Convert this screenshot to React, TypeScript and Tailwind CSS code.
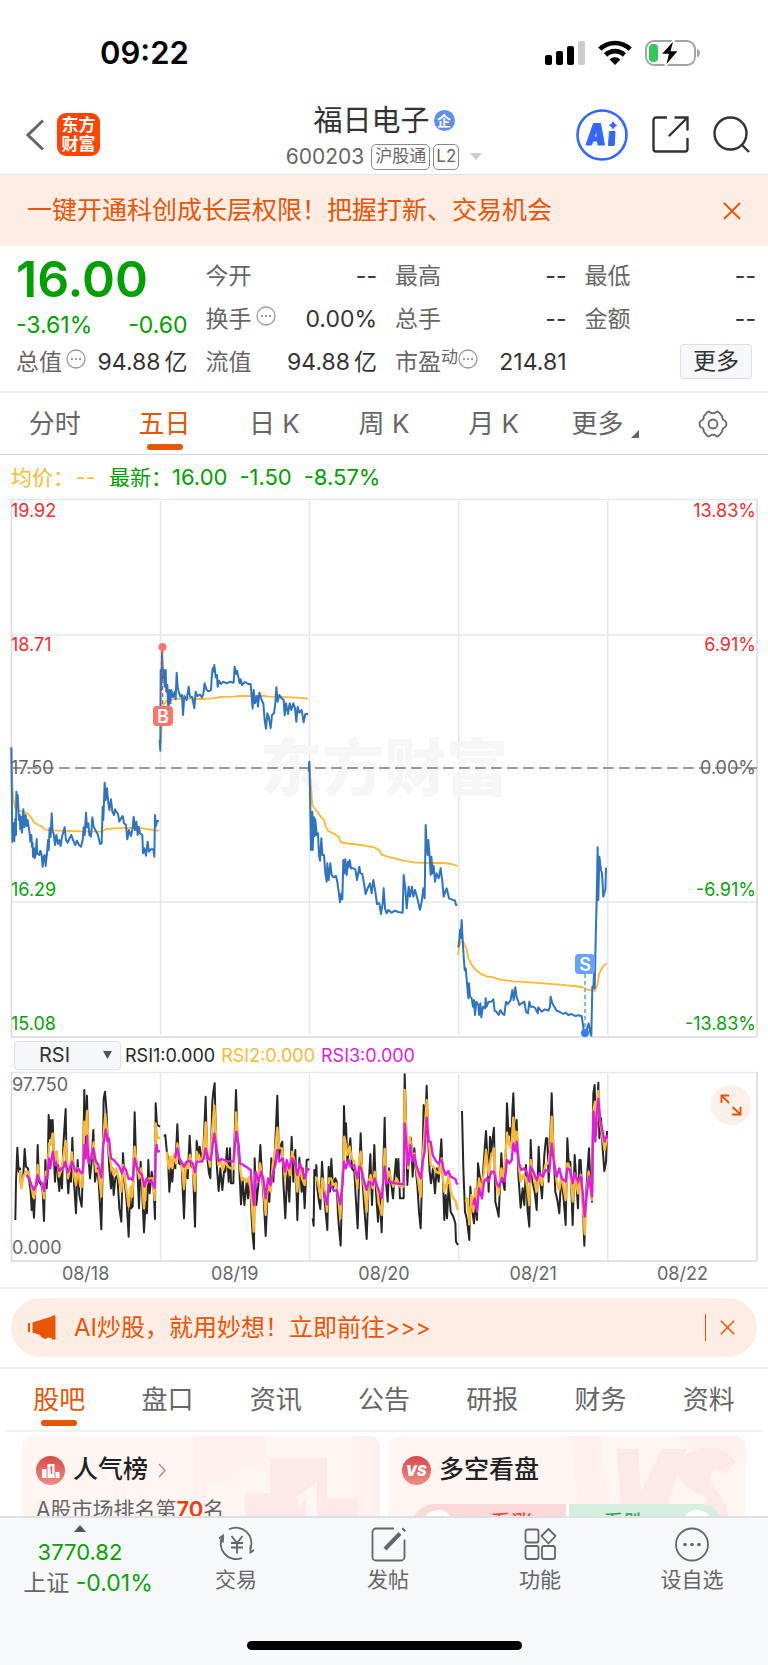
import React, { useState } from 'react';

// Points are plotted on a grid three times finer than the chart units
const PRICE_DAYS = [
  {
    transform: 'translate(0 242) scale(0.33333)',
    avg: '34,25 37,130 40,175 45,203 55,212 70,215 85,222 95,235 103,248 115,255 126,260 135,268 145,271 180,272 245,274 305,275 318,267 345,265 400,263 430,265 450,269 465,272 477,272',
    price: '34,22 37,305 41,250 43,303 46,236 48,285 49,155 51,200 53,165 57,240 59,225 61,268 64,230 66,278 70,208 73,262 77,225 80,258 83,240 86,262 89,280 91,305 94,285 96,320 98,310 99,350 102,325 104,355 107,345 110,297 112,340 118,345 121,332 125,345 128,380 131,350 134,345 137,378 141,340 144,300 146,330 149,265 152,290 155,220 158,275 161,280 165,315 169,285 174,312 178,300 182,318 186,290 194,262 198,300 203,308 207,298 214,285 219,300 226,315 231,302 237,315 243,320 248,300 251,262 254,285 258,218 261,262 265,250 268,285 273,290 277,232 281,260 286,270 293,282 300,312 305,310 308,200 310,240 314,128 317,180 321,145 324,180 328,210 333,178 337,215 342,225 345,208 349,215 354,222 358,245 363,235 368,228 372,250 378,255 382,298 387,270 393,288 398,265 401,230 405,270 409,245 413,285 416,260 420,280 427,285 429,340 433,325 438,347 443,305 447,335 452,328 460,328 463,350 465,225 468,258 471,243 477,243',
  },
  {
    transform: 'translate(0 -8) scale(0.33333)',
    avg: '483,760 486,690 490,645 500,632 520,628 560,625 600,627 640,625 660,621 700,620 720,618 790,618 810,620 880,622 924,626',
    price: '479,750 481,782 482,540 484,600 486,485 489,565 491,540 494,590 497,540 499,605 502,585 505,665 508,600 511,640 514,600 519,622 524,605 527,628 530,548 533,590 536,605 541,620 546,615 549,675 553,618 560,630 566,590 570,620 577,622 583,655 587,605 592,618 600,614 606,622 610,612 614,580 620,600 626,604 633,600 635,565 638,535 641,545 643,525 647,562 651,555 653,590 657,572 663,582 670,575 680,580 690,575 701,578 704,530 708,552 711,542 715,560 719,580 722,568 726,585 735,576 745,582 752,582 755,620 758,655 761,600 765,640 770,618 774,650 778,608 785,630 790,640 794,690 798,716 802,670 806,680 812,714 816,675 822,670 826,640 829,592 833,635 838,615 845,625 851,630 854,676 858,640 864,672 869,640 874,660 880,640 885,655 889,695 893,650 898,668 905,660 911,697 916,672 924,672',
  },
  {
    transform: 'translate(300 242) scale(0.33333)',
    avg: '28,65 32,130 37,195 45,208 55,218 62,230 72,240 78,262 85,273 100,280 115,290 122,305 130,309 160,312 195,317 225,323 240,332 243,343 260,349 285,355 310,362 340,367 380,369 430,369 455,372 472,378',
    price: '26,95 28,65 30,150 33,330 37,215 38,330 42,232 44,288 46,238 50,285 54,280 57,345 60,362 64,295 67,345 72,345 76,400 80,425 82,370 86,420 91,370 95,405 100,412 108,408 112,425 116,455 120,487 124,460 127,478 130,360 133,400 136,358 140,405 144,365 146,382 149,360 153,385 160,385 166,388 171,420 178,380 181,400 187,402 192,430 197,462 203,445 210,430 215,460 220,420 226,455 231,492 238,490 243,522 248,490 251,445 255,505 260,520 265,510 275,518 285,512 295,516 308,518 311,405 316,445 320,505 326,440 330,470 336,440 340,470 345,450 352,475 360,510 366,480 370,445 374,475 377,255 380,320 383,345 385,300 389,350 392,405 394,350 398,400 401,378 405,425 410,400 416,415 422,385 427,425 431,470 436,455 440,445 447,475 455,478 465,482 468,495 472,495',
  },
  {
    transform: 'translate(300 242) scale(0.33333)',
    avg: '474,645 477,620 483,605 488,602 492,610 500,628 505,655 515,675 525,688 540,700 560,709 580,712 600,719 640,724 700,728 780,734 845,741 865,750 885,752 892,735 898,700 908,680 920,670',
    price: '475,622 478,598 480,570 482,595 485,540 488,600 491,650 494,690 497,685 502,740 505,775 507,730 510,770 515,775 519,800 522,780 525,825 529,785 535,795 537,825 541,790 544,832 549,800 555,805 557,775 560,800 566,785 574,785 580,778 584,812 589,815 596,825 601,810 608,822 613,825 618,785 624,792 632,780 637,750 641,780 646,742 650,772 655,785 658,795 665,790 673,785 678,815 684,820 688,785 692,800 700,800 706,805 713,820 715,802 725,815 735,808 745,812 750,800 752,770 757,790 763,800 770,812 780,816 790,822 797,818 805,825 815,822 825,828 835,826 845,828 849,855 853,880 858,882 862,862 866,850 870,875 874,887 877,740 880,745 882,700 884,745 887,600 890,480 893,322 895,480 898,350 903,390 906,400 910,470 914,455 916,450 918,383',
  },
];

const RSI_DAYS = [
  {
    transform: 'translate(0 -36) scale(0.33333)',
    rsi1: '46,555 48,440 52,338 56,410 60,400 63,455 67,430 70,420 74,342 78,395 84,400 88,440 92,470 95,525 98,490 102,548 106,460 110,450 113,330 117,440 124,450 128,470 132,558 136,375 140,460 143,400 146,240 149,310 152,255 155,310 158,255 161,350 165,440 170,350 174,430 178,468 182,400 186,460 190,330 197,222 200,400 205,475 209,400 213,440 217,308 222,440 228,535 233,375 238,480 245,515 249,400 253,165 257,330 261,182 265,360 270,430 275,380 280,285 285,440 291,400 296,440 304,583 308,400 311,190 315,170 319,220 323,310 328,400 333,460 337,400 341,480 346,430 352,420 358,520 364,560 369,355 374,440 380,500 386,605 390,480 393,520 398,515 404,232 408,370 412,400 417,520 422,380 427,480 432,592 437,500 441,535 445,375 449,475 455,410 460,440 465,552 467,205 471,270 480,275',
    rsi2: '60,405 64,460 70,425 78,410 84,410 90,430 95,460 102,490 108,455 113,390 118,435 126,445 132,490 137,410 142,425 147,325 152,330 158,295 164,380 170,350 177,425 184,405 190,365 197,318 204,430 210,400 216,352 222,420 228,450 234,400 241,455 247,455 253,260 257,300 261,228 267,370 274,370 281,322 288,410 295,405 304,485 309,320 316,238 321,290 328,360 335,400 341,420 348,400 356,430 364,470 369,390 376,440 386,515 392,455 397,485 404,335 410,385 418,430 424,400 432,520 438,450 446,430 455,430 460,430 464,495 467,265 472,310 480,308',
    rsi3: '80,420 88,432 94,450 102,465 108,450 113,420 120,440 127,445 132,468 138,425 142,430 147,370 151,400 158,350 165,390 173,390 178,408 186,400 192,395 196,380 203,412 209,400 216,380 223,400 229,410 236,402 244,415 249,410 253,330 257,370 261,302 266,385 272,370 280,340 287,378 295,390 304,428 310,330 317,283 323,320 327,310 333,370 341,375 350,385 358,395 366,415 371,395 378,405 386,432 392,430 398,435 404,370 410,395 418,410 426,420 433,455 440,430 447,440 455,440 464,458 467,350 470,330 472,350 480,348',
  },
  {
    transform: 'translate(0 -36) scale(0.33333)',
    rsi1: '492,305 496,300 500,345 504,370 508,470 513,400 517,440 521,380 526,400 532,268 537,385 545,390 552,550 557,400 563,430 569,302 574,395 579,400 585,575 590,318 595,360 599,335 605,370 610,350 617,185 621,360 627,415 631,430 637,200 640,170 644,145 648,330 651,400 656,468 661,400 667,465 673,400 676,410 681,340 686,440 690,340 693,445 700,445 704,300 708,165 712,300 718,400 723,508 728,430 733,510 740,440 744,490 750,430 755,550 758,600 762,642 764,370 769,510 775,450 781,330 786,420 791,490 797,603 803,470 808,500 814,370 820,440 826,320 832,182 837,370 842,330 847,320 850,440 856,550 862,400 868,500 875,305 880,440 886,345 892,555 898,368 905,470 908,400 914,520 920,375 928,373',
    rsi2: '500,350 506,400 512,365 517,400 523,355 528,385 532,325 538,370 545,385 552,462 558,390 564,400 570,360 577,390 585,468 590,350 598,370 606,380 612,330 617,262 622,350 630,395 636,290 643,212 648,300 655,390 662,375 669,405 676,380 684,395 692,400 702,402 708,232 713,300 720,400 726,435 733,430 740,440 748,425 755,500 761,590 766,420 774,440 780,385 788,430 797,540 804,440 812,470 818,390 825,350 832,278 838,340 846,340 855,430 862,385 870,420 876,350 884,380 892,470 899,390 906,430 914,450 921,400 928,405',
    rsi3: '525,370 532,340 538,370 552,395 560,380 570,378 578,385 585,412 590,380 605,380 612,370 617,340 624,370 633,375 638,330 643,295 650,345 656,378 665,372 680,378 700,380 704,340 709,290 716,330 720,385 730,390 745,400 752,405 758,480 762,510 767,410 776,440 783,410 790,430 797,490 804,430 812,450 820,410 826,390 832,345 838,380 848,370 855,410 860,375 868,400 876,370 884,380 892,420 900,385 908,410 915,430 921,400 928,405',
  },
  {
    transform: 'translate(300 -36) scale(0.33333)',
    rsi1: '38,550 41,572 43,405 47,420 49,390 52,460 57,500 61,522 66,380 71,460 76,520 82,585 86,395 90,470 94,372 99,460 106,430 110,440 114,540 118,590 122,632 126,470 130,380 132,213 135,310 138,265 142,380 151,310 156,400 163,410 168,500 173,580 178,400 182,295 187,430 193,520 200,612 205,470 211,358 216,510 223,330 228,470 234,560 239,480 245,592 250,400 254,248 258,440 263,500 267,400 273,440 279,490 284,420 288,372 292,440 295,372 300,490 311,490 314,118 318,250 322,450 328,330 333,310 338,425 343,340 347,400 352,450 357,530 362,580 367,400 371,210 375,290 380,152 384,300 389,410 393,445 399,400 405,475 410,400 416,440 424,313 429,440 433,555 437,480 441,550 446,450 452,530 460,545 466,565 468,620 474,630',
    rsi2: '50,425 55,450 62,490 67,430 73,460 81,530 87,430 93,430 100,450 108,445 115,490 121,550 126,450 130,380 133,305 138,330 142,360 149,335 155,370 163,380 172,460 177,380 182,350 188,420 200,530 206,440 212,420 218,460 224,410 230,450 236,500 245,540 250,430 254,342 260,440 267,410 280,455 290,430 300,455 311,455 314,165 319,300 324,400 330,305 337,370 343,355 350,410 362,485 367,380 373,300 380,195 386,310 392,390 400,395 408,410 418,415 425,370 432,470 440,450 446,420 452,470 460,490 468,500 470,515 474,525',
    rsi3: '72,470 81,508 87,450 94,455 102,468 110,465 121,508 127,450 132,380 137,400 146,375 152,395 162,390 172,430 178,395 183,400 190,430 200,465 206,440 214,445 219,450 224,430 232,455 245,490 250,440 254,395 260,445 268,440 285,445 311,448 314,265 320,340 325,390 331,330 337,380 343,360 350,395 362,430 368,380 374,350 380,248 386,320 392,320 398,360 406,375 414,385 425,375 430,400 437,420 445,408 452,425 466,432 470,445 474,448',
  },
  {
    transform: 'translate(300 -36) scale(0.33333)',
    rsi1: '486,228 490,400 495,530 500,550 508,615 511,455 516,520 522,565 527,490 531,555 534,385 540,430 546,460 552,370 558,288 563,380 566,470 570,305 574,350 578,310 582,278 586,500 592,525 596,545 604,355 609,440 614,465 618,330 621,205 626,300 630,280 634,320 637,230 640,175 645,330 650,255 655,420 662,518 668,460 673,510 678,390 683,530 688,575 692,315 697,440 704,470 710,525 716,335 721,440 726,490 733,360 738,310 742,310 746,440 751,300 755,175 760,330 766,470 772,495 778,535 783,430 790,480 797,570 802,310 806,380 811,380 818,570 824,360 829,440 834,520 838,375 842,375 848,500 853,632 858,480 863,400 867,340 871,440 876,500 880,175 884,150 888,300 892,230 895,143 898,310 903,250 908,340 913,408 918,380 921,288',
    rsi2: '497,500 502,490 508,568 514,480 520,530 526,460 531,500 537,430 544,470 552,410 558,345 566,420 572,370 582,340 588,440 596,480 604,400 610,425 616,370 621,293 628,330 634,340 640,247 646,330 650,290 656,390 662,440 670,420 678,430 688,510 692,375 700,420 710,470 718,420 726,450 736,390 745,385 750,350 755,245 762,370 770,440 778,465 784,420 797,495 802,385 810,400 818,500 824,415 834,475 842,420 848,500 854,598 860,470 866,410 876,495 880,230 885,200 890,260 895,168 900,260 908,310 914,345 921,310',
    rsi3: '520,510 524,490 531,530 537,460 546,490 552,440 560,430 566,440 574,410 582,410 590,445 598,455 605,430 614,440 621,375 628,385 635,375 640,325 646,350 650,320 657,385 664,405 672,400 680,410 688,440 692,395 700,410 710,435 718,415 728,425 737,405 748,410 755,325 762,385 770,425 778,400 785,430 797,440 802,400 810,405 818,445 824,415 834,440 842,425 848,470 854,545 860,480 867,425 876,485 880,230 886,320 889,250 895,192 901,260 908,290 914,320 921,300',
  },
];

const PRICE_LABELS = [
  { y: 19, left: '19.92', right: '13.83%', color: '#f92a2a' },
  { y: 153, left: '18.71', right: '6.91%', color: '#f92a2a' },
  { y: 276, left: '17.50', right: '0.00%', color: '#666666' },
  { y: 398, left: '16.29', right: '-6.91%', color: '#07a207' },
  { y: 532, left: '15.08', right: '-13.83%', color: '#07a207' },
];

const DATES = ['08/18', '08/19', '08/20', '08/21', '08/22'];
const PERIODS = ['分时', '五日', '日 K', '周 K', '月 K'];
const SECTIONS = ['股吧', '盘口', '资讯', '公告', '研报', '财务', '资料'];

const MoreDots = () => (
  <svg width="20" height="20" viewBox="0 0 20 20" className="shrink-0">
    <circle cx="10" cy="10" r="9" fill="none" stroke="#999" strokeWidth="1.3" />
    <g fill="#888">
      <circle cx="6" cy="10" r="1.1" />
      <circle cx="10" cy="10" r="1.1" />
      <circle cx="14" cy="10" r="1.1" />
    </g>
  </svg>
);

const CloseIcon = ({ size }: { size: number }) => (
  <svg width={size} height={size} viewBox="0 0 18 18" stroke="#ea5504" strokeWidth="1.8">
    <path d="M1 1 17 17M17 1 1 17" />
  </svg>
);

const StatusBar = () => (
  <div className="flex h-23 items-center justify-between pt-[13px] pr-[67px] pl-[100px]">
    <span className="text-[31px] leading-10 font-semibold text-black">09:22</span>
    <div className="flex items-center gap-[13px]">
      <svg width="40" height="26" viewBox="0 0 40 26">
        <rect x="0" y="15" width="7" height="10" rx="2" />
        <rect x="11" y="11" width="7" height="14" rx="2" />
        <rect x="22" y="6" width="7" height="19" rx="2" />
        <rect x="33" y="1" width="7" height="24" rx="2" fill="#ccc" />
      </svg>
      <svg width="34" height="26" viewBox="0 0 34 26" fill="none" stroke="#000" strokeWidth="4.6">
        <path d="M1.8 9.2a21.6 21.6 0 0 1 30.4 0" />
        <path d="M7.6 15a13.4 13.4 0 0 1 18.8 0" />
        <path d="M17 25 11.6 19.4a7.7 7.7 0 0 1 10.8 0Z" fill="#000" stroke="none" />
      </svg>
      <svg width="56" height="28" viewBox="0 0 56 28">
        <rect x="1" y="2" width="49" height="24" rx="8" fill="none" stroke="#a5a5a5" strokeWidth="2" />
        <path d="M52 10c4 1 4 7 0 8Z" fill="#a5a5a5" />
        <rect x="4" y="5" width="9" height="18" rx="4" fill="#34c759" />
        <path d="M29.500 0 15.500 15.500h7.500L20 28 34 11.500h-7.500Z" stroke="#fff" strokeWidth="1.500" />
      </svg>
    </div>
  </div>
);

const Header = () => (
  <header className="grid h-[83px] grid-cols-[1fr_auto_1fr] items-center border-b border-[#dfe2e6] px-[18px] pt-[3px]">
    <div className="flex items-center gap-[13px] pl-2">
      <button aria-label="返回">
        <svg width="18" height="32" viewBox="0 0 18 32" fill="none" stroke="#666" strokeWidth="3">
          <path d="M17 1.500 2 16l15 14.500" />
        </svg>
      </button>
      <div className="flex size-[43px] flex-col items-center justify-center rounded-[9px] bg-[#ff4400] text-[17px] leading-[19px] font-bold text-white">
        <span>东方</span>
        <span>财富</span>
      </div>
    </div>
    <div className="flex flex-col items-center pt-1.5">
      <h1 className="flex h-[38px] items-center gap-1 text-[29px] text-[#333]">
        福日电子
        <span className="flex size-[21px] items-center justify-center rounded-full bg-[#5f8fea] text-[14px] leading-none font-bold text-white">企</span>
      </h1>
      <div className="flex h-[34px] items-center gap-[3px] text-[#666]">
        <span className="mr-1 text-[21px]">600203</span>
        <span className="flex h-[26px] items-center rounded-[5px] border border-[#888] px-[3px] text-[17px]">沪股通</span>
        <span className="flex h-[26px] items-center rounded-[5px] border border-[#888] px-[2px] text-[17px]">L2</span>
        <svg width="12" height="7" viewBox="0 0 12 7" className="ml-2" fill="#ccc">
          <path d="M0 0h12L6 7Z" />
        </svg>
      </div>
    </div>
    <div className="flex items-center justify-end gap-6">
      <button aria-label="AI助手">
        <svg width="52" height="52" viewBox="0 0 52 52">
          <circle cx="26" cy="26" r="24.500" fill="#fff" stroke="#3366ff" strokeWidth="2.600" />
          <path d="M17.500 14.500h7l4 21.500h-6.500l-.5-4h-4.500l-1.500 4H10ZM20.500 21l-2.300 7h3Z" fill="#3366ff" fillRule="evenodd" stroke="#3366ff" strokeLinejoin="round" />
          <path d="M33.500 22.500h5.500L38.200 36.500H32.500Z" fill="#3366ff" stroke="#3366ff" strokeLinejoin="round" />
          <path d="M37 12l1.600 2.700 2.700 1.600-2.700 1.600L37 20.600l-1.600-2.700-2.700-1.600 2.700-1.600Z" fill="#3366ff" />
        </svg>
      </button>
      <button aria-label="分享">
        <svg width="37" height="37" viewBox="0 0 37 37" fill="none" stroke="#333" strokeWidth="2.400" strokeLinecap="round">
          <path d="M14 1.500H4A2.500 2.500 0 0 0 1.500 4v29A2.500 2.500 0 0 0 4 35.500h29a2.500 2.500 0 0 0 2.500-2.500V23" />
          <path d="M23.500 1.500h12V13.500M35 2 17.500 19.500" />
        </svg>
      </button>
      <button aria-label="搜索">
        <svg width="37" height="37" viewBox="0 0 37 37" fill="none" stroke="#333" strokeWidth="2.400">
          <circle cx="17.500" cy="17.500" r="16" />
          <path d="M28.500 28.500 36 36" />
        </svg>
      </button>
    </div>
  </header>
);

interface StatProps {
  label: string;
  value: string;
  unit?: string;
  dots?: boolean;
  sup?: string;
}

const Stat: React.FC<StatProps> = ({ label, value, unit, dots, sup }) => (
  <div className="flex h-[43px] items-center justify-between">
    <span className="flex items-center text-[23px] text-[#666]">
      {label}
      {sup && <span className="mb-3 text-[17px] leading-6">{sup}</span>}
      {dots && <span className={sup ? 'mb-2' : 'mb-2 ml-1'}><MoreDots /></span>}
    </span>
    <span className="flex gap-1 text-[23px] text-[#333]">
      {value}
      {unit && <span>{unit}</span>}
    </span>
  </div>
);

const Quote = () => (
  <section className="grid grid-cols-4 gap-x-[18px] border-b-2 border-[#eceef2] pt-[9px] pr-3 pb-[7px] pl-4">
    <div className="flex flex-col">
      <div className="flex h-12 items-center text-[50px] font-semibold text-[#00a000]">16.00</div>
      <div className="flex h-[38px] items-end justify-between text-[23px] leading-8 text-[#00a000]">
        <span>-3.61%</span>
        <span>-0.60</span>
      </div>
      <Stat label="总值" value="94.88" unit="亿" dots />
    </div>
    <div>
      <Stat label="今开" value="--" />
      <Stat label="换手" value="0.00%" dots />
      <Stat label="流值" value="94.88" unit="亿" />
    </div>
    <div>
      <Stat label="最高" value="--" />
      <Stat label="总手" value="--" />
      <Stat label="市盈" value="214.81" sup="动" dots />
    </div>
    <div>
      <Stat label="最低" value="--" />
      <Stat label="金额" value="--" />
      <div className="flex h-10 items-center justify-end pr-1">
        <button className="h-[35px] w-[72px] rounded-[4px] border border-[#dcdfe6] bg-[#f6f7fa] text-[23px] leading-8 text-[#333]">更多</button>
      </div>
    </div>
  </section>
);

const Underline = () => <span className="absolute bottom-1 left-1/2 h-1.5 w-9 -translate-x-1/2 rounded-full bg-[#ea5504]" />;

const PeriodTabs = () => {
  const [active, setActive] = useState('五日');

  return (
    <nav className="grid h-[62px] grid-cols-7 border-b border-[#d5d8df] text-[26px] text-[#666]">
      {PERIODS.map(p => (
        <button key={p} onClick={() => setActive(p)} className={p === active ? 'relative text-[#ea5504]' : 'relative'}>
          {p}
          {p === active && <Underline />}
        </button>
      ))}
      <button className="flex items-center justify-center gap-2 pl-1">
        更多
        <svg width="8" height="8" viewBox="0 0 8 8" fill="#666" className="mt-5">
          <path d="M8 0v8H0Z" />
        </svg>
      </button>
      <button aria-label="设置" className="flex items-center justify-center">
        <svg width="30" height="28" viewBox="0 0 30 28" fill="none" stroke="#666" strokeWidth="1.800" strokeLinejoin="round">
          <path d="M9 2.500Q10.500.7 12 2.200 15 4.500 18 2.200 19.500.7 21 2.500L24.300 6.500Q23.800 9.500 26.500 10.500 28.500 11.500 28.500 14T26.500 17.500Q23.800 18.500 24.300 21.500L21 25.500Q19.500 27.300 18 25.800 15 23.500 12 25.800 10.500 27.300 9 25.500L5.700 21.500Q6.200 18.500 3.500 17.500 1.500 16.500 1.500 14T3.500 10.500Q6.200 9.500 5.700 6.500Z" />
          <circle cx="15" cy="14" r="4.500" />
        </svg>
      </button>
    </nav>
  );
};

const PriceChart = () => (
  <svg viewBox="0 0 768 541" className="block h-auto w-full" role="img" aria-label="五日走势">
    <g fill="none" stroke="#e4e7ee" strokeWidth="1.500">
      <path d="M11 1.500H757M11 137H757M11 404H757M160.500 3V537M309.500 3V537M458.700 3V537M607.700 3V537" />
      <path d="M11.500 1V539M757 1V539M11 539H757" stroke="#d5d9e2" />
    </g>
    <text x="384" y="293" textAnchor="middle" fontSize="62" fontWeight="900" fill="#f6f6f7">东方财富</text>
    <path d="M11 270H757" stroke="#777" strokeWidth="1.300" strokeDasharray="10.700 5.300" />
    {PRICE_DAYS.map((d, i) => (
      <g key={i} transform={d.transform} fill="none" strokeLinejoin="round">
        <polyline points={d.avg} stroke="#fdb930" strokeWidth="5.500" />
        <polyline points={d.price} stroke="#2f74c0" strokeWidth="6" />
      </g>
    ))}
    <g fontSize="18">
      {PRICE_LABELS.map(l => (
        <g key={l.left} fill={l.color}>
          <text x="11" y={l.y}>{l.left}</text>
          <text x="756" y={l.y} textAnchor="end">{l.right}</text>
        </g>
      ))}
    </g>
    <path d="M162.500 153V208" stroke="#e0504a" strokeWidth="1.500" strokeDasharray="4 3" />
    <circle cx="162.500" cy="149" r="4" fill="#ff7468" />
    <rect x="153" y="208" width="20" height="20" rx="4" fill="#ff7468" />
    <text x="163" y="225" textAnchor="middle" fontSize="18" fontWeight="600" fill="#fff">B</text>
    <path d="M585 476V531" stroke="#5a9cff" strokeWidth="1.500" strokeDasharray="4 3" />
    <circle cx="585" cy="535" r="4" fill="#2f80f5" />
    <rect x="575" y="456" width="20" height="20" rx="4" fill="#66a3ff" />
    <text x="585" y="473" textAnchor="middle" fontSize="18" fontWeight="600" fill="#fff">S</text>
  </svg>
);

const RsiChart = () => (
  <div className="relative">
    <svg viewBox="0 0 768 192" className="block h-auto w-full" role="img" aria-label="RSI">
      <g fill="none" stroke="#e4e7ee" strokeWidth="1.500">
        <path d="M11 1.500H757M160.500 3V190M309.500 3V190M458.700 3V190M607.700 3V190" />
        <path d="M11.500 1V190M757 1V190M11 190H757" stroke="#d5d9e2" />
      </g>
      {RSI_DAYS.map((d, i) => (
        <g key={i} transform={d.transform} fill="none" strokeLinejoin="round">
          <polyline points={d.rsi1} stroke="#262626" strokeWidth="6" />
          <polyline points={d.rsi2} stroke="#fdb930" strokeWidth="7" />
          <polyline points={d.rsi3} stroke="#e21be2" strokeWidth="7" />
        </g>
      ))}
      <g fontSize="18" fill="#666">
        <text x="12" y="20">97.750</text>
        <text x="12" y="183">0.000</text>
      </g>
    </svg>
    <button aria-label="全屏" className="absolute top-[14px] right-[17px] flex size-10 items-center justify-center rounded-full bg-[#fdf0ea]">
      <svg width="22" height="22" viewBox="0 0 22 22" fill="none" stroke="#ea5504" strokeWidth="1.900">
        <path d="M1.500 9V1.500H9M2 2l7 7M12 20.500h8.500V13M20 20l-7.500-7" />
      </svg>
    </button>
  </div>
);

const Charts = () => (
  <section className="border-b-2 border-[#eef0f3] pb-[2px]">
    <div className="flex h-[43px] items-center px-[11px] pt-0.5 text-[21px] text-[#00a000]">
      <span className="flex w-[98px] gap-0.5 text-[#fdb930]">均价：<span>--</span></span>
      <span>最新：</span>
      <span className="flex gap-3 text-[22px]"><span>16.00</span><span>-1.50</span><span>-8.57%</span></span>
    </div>
    <PriceChart />
    <div className="flex h-8 items-center gap-1.5 pl-3.5 text-[18px]">
      <label className="relative mr-[-2px] block">
        <span className="sr-only">指标</span>
        <select className="block h-[29px] w-[107px] appearance-none rounded-[4px] border border-[#dcdfe6] bg-[#f6f7fa] pl-6 text-[20px] leading-[26px] text-[#333]">
          <option>RSI</option>
        </select>
        <svg width="9" height="8" viewBox="0 0 9 8" fill="#555" className="pointer-events-none absolute top-[10px] right-[9px]">
          <path d="M0 0h9L4.500 8Z" />
        </svg>
      </label>
      <span className="text-[#262626]">RSI1:0.000</span>
      <span className="text-[#fdb930]">RSI2:0.000</span>
      <span className="text-[#e21be2]">RSI3:0.000</span>
    </div>
    <RsiChart />
    <div className="grid grid-cols-5 px-[11px] text-center text-[18px] leading-[22px] text-[#666]">
      {DATES.map(d => <span key={d}>{d}</span>)}
    </div>
  </section>
);

const AiBanner = () => (
  <div className="border-b-2 border-[#eceef2] px-[11px] pt-[9px] pb-[10px]">
    <div className="flex h-[59px] items-center rounded-full bg-[#feede5] pr-[22px] pl-[17px] text-[#ea5504]">
      <svg width="28" height="25" viewBox="0 0 28 25" fill="#ea5504" className="mr-[18px]">
        <path d="M0 8h2v9H0ZM4.500 7.500 24 1.500V.500h3.500V24.500H24V23.500l-4-1.300q-1 2-4 1.300t-4-3.500L4.500 17.500Z" />
      </svg>
      <a href="#ai" className="flex-1 text-[24px]">AI炒股，就用妙想！立即前往<span className="text-[23px]">{'>>>'}</span></a>
      <span className="mr-[14px] h-[27px] w-px bg-[#ea5504]" />
      <button aria-label="关闭"><CloseIcon size={15} /></button>
    </div>
  </div>
);

const SectionTabs = () => {
  const [active, setActive] = useState('股吧');

  return (
    <nav className="mx-[5px] grid h-[63px] grid-cols-7 border-b-2 border-[#eef0f3] text-[26px] text-[#666]">
      {SECTIONS.map(s => (
        <button key={s} onClick={() => setActive(s)} className={s === active ? 'relative text-[#ea5504]' : 'relative'}>
          {s}
          {s === active && <Underline />}
        </button>
      ))}
    </nav>
  );
};

const Cards = () => (
  <section className="grid h-[84px] grid-cols-2 gap-2 overflow-hidden px-[22px] pt-1">
    <div className="relative h-[160px] overflow-hidden rounded-[12px] bg-[#fff6f4] pt-[17px] pl-3.5">
      <svg width="187" height="160" viewBox="0 0 187 160" className="absolute top-0 right-0">
        <path d="M0 0H72V32H44V46H14V110H0ZM162 0h25v110h-25Z" fill="#fef1ef" />
        <path d="M52 57H77V22H134V62H164V110H52Z" fill="#fde9e7" />
        <path d="M105 60 124 46V110H113V64l-8 6Z" fill="#fff6f4" />
      </svg>
      <div className="relative flex h-[34px] items-center text-[25px] font-medium text-[#222]">
        <svg width="29" height="29" viewBox="0 0 29 29" className="mr-2">
          <defs>
            <linearGradient id="badge" x1="0" y1="0" x2="0" y2="1">
              <stop offset="0" stopColor="#d94a47" />
              <stop offset="1" stopColor="#f08d86" />
            </linearGradient>
          </defs>
          <circle cx="14.500" cy="14.500" r="14.500" fill="url(#badge)" />
          <path d="M6 13h4.500v9H6ZM11.500 8h7v14h-7ZM19.500 16h4v6h-4Z" fill="#fff" />
          <path d="M13.800 12.500 15.500 11.300V18" fill="none" stroke="#dd5a55" strokeWidth="1.500" />
        </svg>
        人气榜
        <svg width="8" height="15" viewBox="0 0 8 15" className="ml-2.5" fill="none" stroke="#999" strokeWidth="1.500">
          <path d="M1 1l6 6.500L1 14" />
        </svg>
      </div>
      <p className="relative mt-1.5 text-[21px] leading-8 text-[#666]">
        A股市场排名第<span className="text-[22px] font-semibold text-[#ea3f0c]">70</span>名
      </p>
    </div>
    <div className="relative h-[160px] overflow-hidden rounded-[12px] bg-[#fff6f4] pt-[17px] pl-3.5">
      <svg width="176" height="160" viewBox="0 0 176 160" className="absolute top-0 right-0">
        <path d="M0 0H30L45 110H14ZM110 0H176V30Q150 5 130 20Z" fill="#fef1ef" />
        <path d="M47 13H68L71 56 92 13H116L84 110H53Z" fill="#fde9e7" />
        <path d="M166 26Q152 10 134 12 108 16 108 34 108 50 130 58 140 62 136 70L104 82 98 110H156Q164 84 152 62 142 50 140 42 142 28 156 38Z" fill="#fde9e7" />
      </svg>
      <div className="relative flex h-[34px] items-center text-[25px] font-medium text-[#222]">
        <svg width="29" height="29" viewBox="0 0 29 29" className="mr-2">
          <circle cx="14.500" cy="14.500" r="14.500" fill="url(#badge)" />
          <text x="14" y="20" textAnchor="middle" fontSize="14" fontWeight="900" fontStyle="italic" fill="#fff">VS</text>
        </svg>
        多空看盘
      </div>
      <div className="relative mt-[17px] mr-[23px] ml-[10px] flex h-11 overflow-hidden rounded-full text-[21px] leading-[38px] font-medium">
        <span className="flex flex-1 items-start gap-9 bg-[#fddad8] pl-2.5 text-[#ee4a3c]">
          <span className="mt-1.5 size-8 rounded-full bg-white" />
          看涨
        </span>
        <span className="h-full w-[3px] bg-white" />
        <span className="flex flex-1 items-start justify-end gap-9 bg-[#d6f0dd] pr-2.5 text-[#2fa866]">
          看跌
          <span className="mt-1.5 size-8 rounded-full bg-white" />
        </span>
      </div>
    </div>
  </section>
);

const NAV_ITEMS = [
  {
    label: '交易',
    icon: (
      <>
        <path d="M11 2.800A15.500 15.500 0 0 1 32.500 22M24 31.500A15.500 15.500 0 0 1 5 9" />
        <path d="M1 12 5 9V16M36 23.500 32.500 26V19" />
        <path d="M13.500 9.500 19 16.500 24.500 9.500M13 16.500H25M13 21H25M19 16.500V27" />
      </>
    ),
  },
  {
    label: '发帖',
    icon: (
      <>
        <path d="M24 2H6A3.500 3.500 0 0 0 2.500 5.500v25A3.500 3.500 0 0 0 6 34H31a3.500 3.500 0 0 0 3.500-3.500V13" />
        <path d="M15 22.500 30 7M33 4 34.500 2.500" strokeWidth="4" />
      </>
    ),
  },
  {
    label: '功能',
    icon: (
      <>
        <rect x="3.500" y="3" width="13" height="13" rx="2" />
        <rect x="3.500" y="19.500" width="13" height="13" rx="2" />
        <rect x="20" y="19.500" width="13" height="13" rx="2" />
        <path d="M26.500 2.500 33.500 9.500 26.500 17 19.500 9.500Z" strokeLinejoin="round" />
      </>
    ),
  },
  {
    label: '设自选',
    icon: (
      <>
        <circle cx="18" cy="18" r="16" />
        <g fill="#666" stroke="none">
          <circle cx="11" cy="18" r="1.800" />
          <circle cx="18" cy="18" r="1.800" />
          <circle cx="25" cy="18" r="1.800" />
        </g>
      </>
    ),
  },
];

const BottomBar = () => (
  <footer className="border-t-2 border-[#dde0e6] bg-[#f7f8fa] pb-[15px]">
    <div className="flex h-[123px] text-[#666]">
      <button className="flex w-40 flex-col items-center pt-[7px] text-[#07a207]">
        <svg width="12" height="7" viewBox="0 0 12 7" fill="#555">
          <path d="M0 7h12L6 0Z" />
        </svg>
        <span className="mt-1 text-[22px] leading-[32px]">3770.82</span>
        <span className="pl-4 text-[23px] leading-[30px]"><span className="text-[#666]">上证</span> -0.01%</span>
      </button>
      <nav className="grid flex-1 grid-cols-4">
        {NAV_ITEMS.map(item => (
          <button key={item.label} className="flex flex-col items-center pt-2 text-[21px] leading-[34px]">
            <svg width="37" height="37" viewBox="0 0 37 36" fill="none" stroke="#666" strokeWidth="1.800">
              {item.icon}
            </svg>
            {item.label}
          </button>
        ))}
      </nav>
    </div>
    <div className="mx-auto h-[9px] w-[275px] rounded-full bg-black" />
  </footer>
);

export default function App() {
  const [showNotice, setShowNotice] = useState(true);

  return (
    <div className="min-h-screen bg-white font-[Inter,'Noto_Sans_CJK_SC',sans-serif]">
      <StatusBar />
      <Header />
      {showNotice && (
        <div className="flex h-[71px] items-center justify-between bg-[#feede5] pr-[27px] pl-[27px] text-[25px] text-[#ea5504]">
          <a href="#notice">一键开通科创成长层权限！把握打新、交易机会</a>
          <button aria-label="关闭" onClick={() => setShowNotice(false)}><CloseIcon size={18} /></button>
        </div>
      )}
      <Quote />
      <PeriodTabs />
      <Charts />
      <AiBanner />
      <SectionTabs />
      <Cards />
      <BottomBar />
    </div>
  );
}
